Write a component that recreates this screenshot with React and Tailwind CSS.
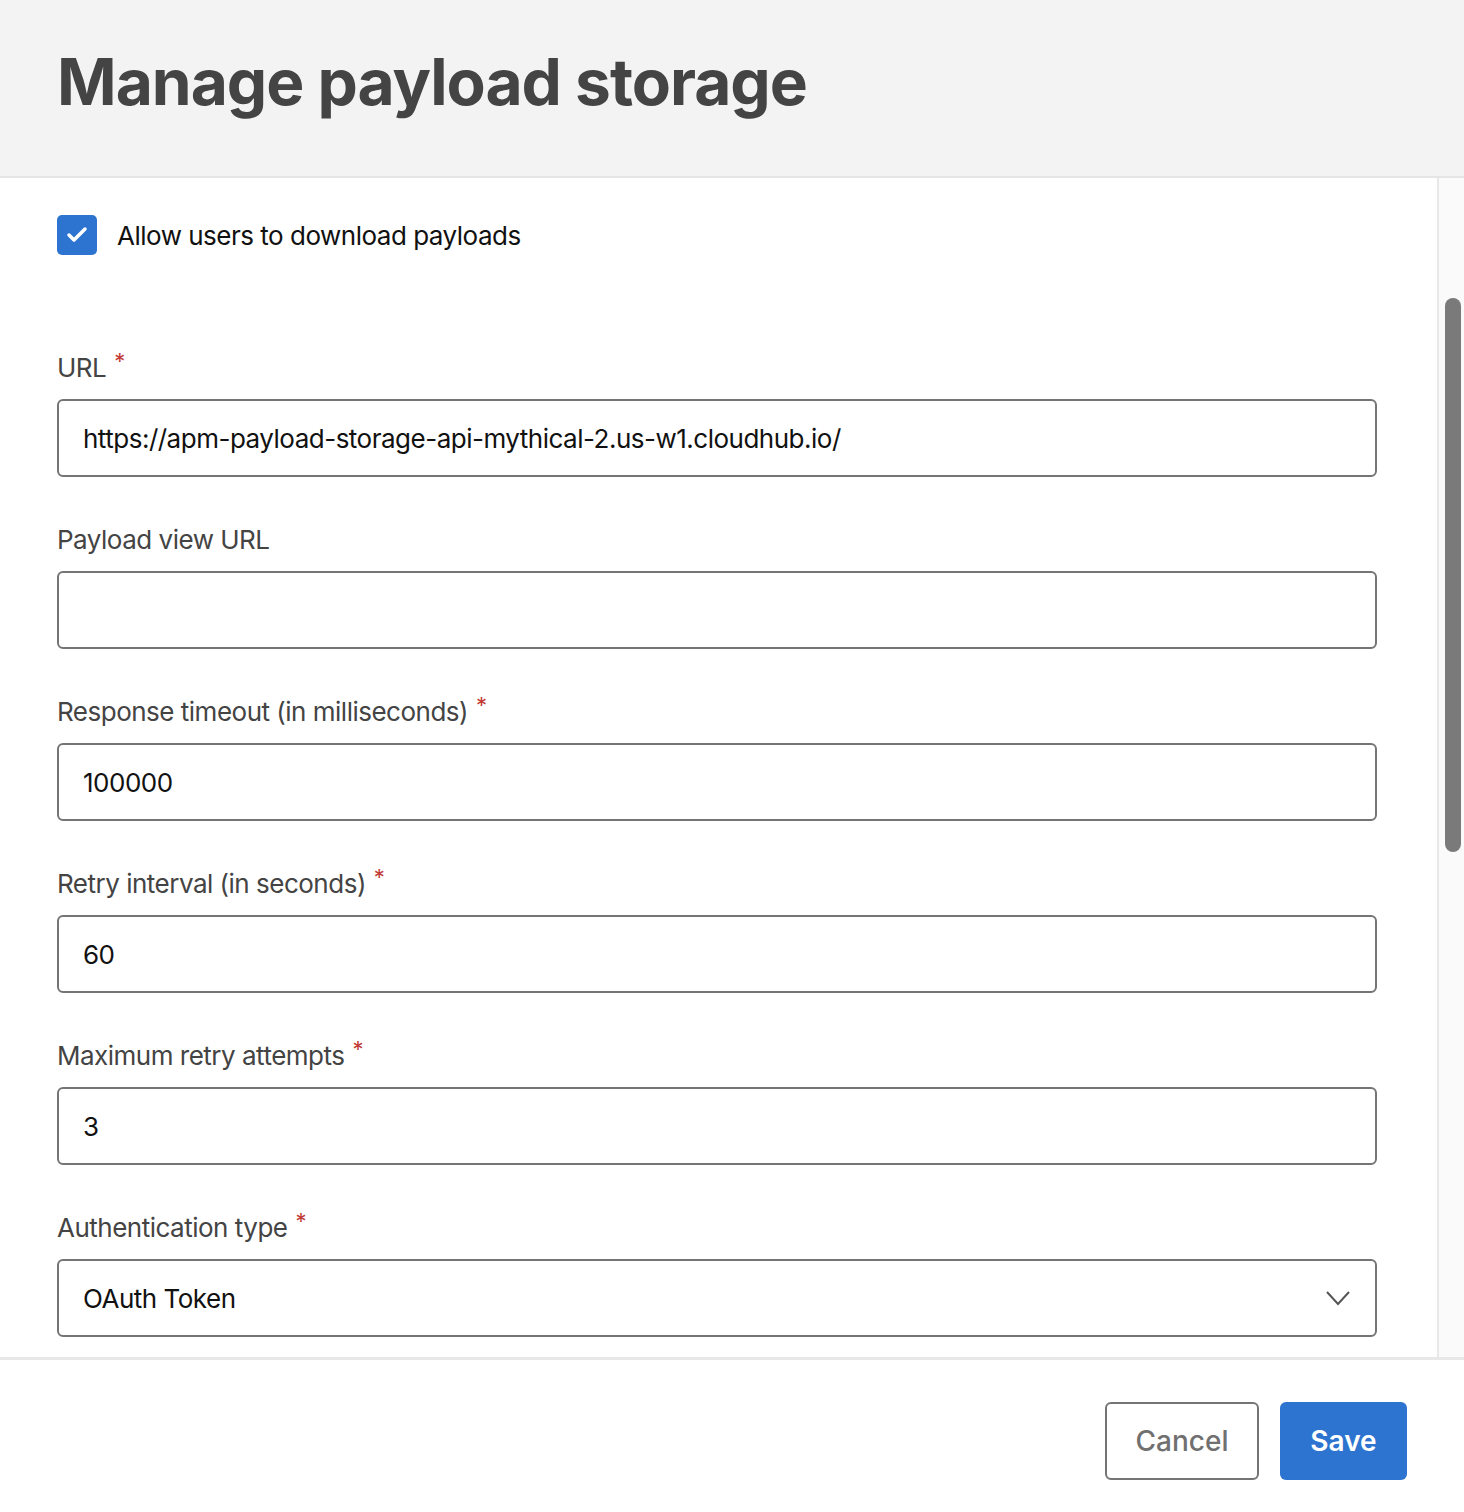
export default function App() {
  const font = { fontFamily: 'Inter, "Liberation Sans", sans-serif' };
  const Field = ({ label, req, value, select }) => (
    <div className="mb-[46px]">
      <div className="h-8 mb-4 flex items-center text-[26px] text-[#444] tracking-[-0.5px]">
        {label}
        {req && <span className="text-[#c23934] ml-2 text-[22px] -mt-3">*</span>}
      </div>
      <div className="h-[78px] border-2 border-[#757575] rounded-[6px] flex items-center px-6 text-[26px] text-[#111] tracking-[-0.5px]">
        <span className="flex-1">{value}</span>
        {select && (
          <svg width="26" height="16" viewBox="0 0 26 16" fill="none" stroke="#555" strokeWidth="2">
            <path d="M2 2l11 12L24 2" />
          </svg>
        )}
      </div>
    </div>
  );
  return (
    <div className="w-[1464px] h-[1512px] flex flex-col bg-white overflow-hidden" style={font}>
      <div className="h-[178px] shrink-0 bg-[#f3f3f3] border-b-2 border-[#e5e5e5] px-[57px] flex items-center">
        <h1 className="text-[64px] font-bold text-[#444] tracking-[-1px] -mt-3">Manage payload storage</h1>
      </div>
      <div className="flex-1 flex overflow-hidden">
        <div className="flex-1 overflow-hidden pl-[57px] pr-[60px] pt-[37px]">
          <div className="flex items-center h-10">
            <div className="w-10 h-10 rounded-[5px] bg-[#2d74d0] flex items-center justify-center">
              <svg width="22" height="18" viewBox="0 0 22 18" fill="none" stroke="white" strokeWidth="3.5" strokeLinecap="round" strokeLinejoin="round">
                <path d="M3 9l5 5L19 3" />
              </svg>
            </div>
            <span className="ml-5 text-[26px] text-[#111] tracking-[-0.5px]">Allow users to download payloads</span>
          </div>
          <div className="h-[96px]" />
          <Field label="URL" req value="https://apm-payload-storage-api-mythical-2.us-w1.cloudhub.io/" />
          <Field label="Payload view URL" value="" />
          <Field label="Response timeout (in milliseconds)" req value="100000" />
          <Field label="Retry interval (in seconds)" req value="60" />
          <Field label="Maximum retry attempts" req value="3" />
          <Field label="Authentication type" req value="OAuth Token" select />
        </div>
        <div className="w-[27px] shrink-0 bg-[#fafafa] border-l-2 border-[#e8e8e8] pt-[120px] pl-[6px]">
          <div className="w-4 h-[554px] rounded-full bg-[#7a7a7a]" />
        </div>
      </div>
      <div className="h-[155px] shrink-0 border-t-[3px] border-[#e8e8e8] flex justify-end items-start gap-[21px] pr-[57px] pt-[42px]">
        <button className="w-[154px] h-[78px] border-2 border-[#757575] rounded-[6px] text-[28px] font-medium text-[#707070]">Cancel</button>
        <button className="w-[127px] h-[78px] rounded-[6px] bg-[#2d74d0] text-[28px] font-semibold text-white">Save</button>
      </div>
    </div>
  );
}
